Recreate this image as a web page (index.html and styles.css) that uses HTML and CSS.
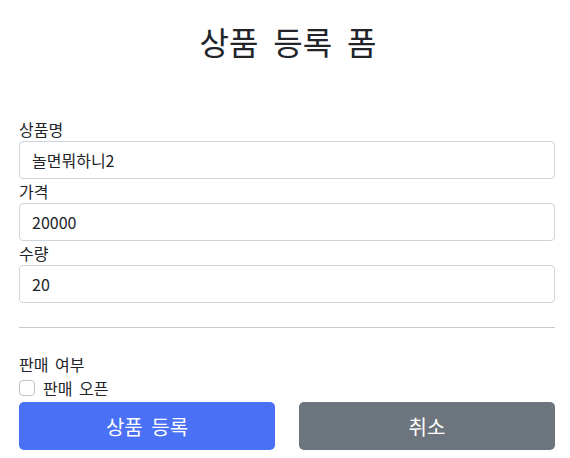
FILE: index.html
```html
<!DOCTYPE html>
<html lang="ko">
<head>
    <meta charset="UTF-8">
    <title>상품 등록 폼</title>
    <link rel="stylesheet" href="styles.css">
</head>
<body>
<div class="container">
    <div class="py-title">
        <h2>상품 등록 폼</h2>
    </div>

    <form class="item-form">
        <div>
            <label for="itemName">상품명</label>
            <input type="text" id="itemName" class="form-control" value="놀면뭐하니2">
        </div>
        <div>
            <label for="price">가격</label>
            <input type="text" id="price" class="form-control" value="20000">
        </div>
        <div>
            <label for="quantity">수량</label>
            <input type="text" id="quantity" class="form-control" value="20">
        </div>

        <hr class="my-4">

        <div>판매 여부</div>
        <div class="form-check">
            <input type="checkbox" id="open" class="check-input">
            <label for="open" class="check-label">판매 오픈</label>
        </div>

        <div class="row">
            <button class="btn btn-primary" type="submit">상품 등록</button>
            <button class="btn btn-secondary" type="button">취소</button>
        </div>
    </form>
</div>
</body>
</html>
```
FILE: styles.css
```css
body {
    margin: 0;
    font-family: "Noto Sans CJK KR", "Noto Sans", sans-serif;
    font-size: 16px;
    line-height: 24px;
    color: #212529;
    background: #fff;
    word-spacing: 2px;
}

.container {
    padding: 0 15px 0 19px;
}

.py-title {
    text-align: center;
    padding-top: 22px;
}

.py-title h2 {
    margin: 0;
    font-size: 32px;
    line-height: 38px;
    font-weight: 400;
    word-spacing: 6px;
    padding-left: 2px;
}

.item-form {
    margin-top: 57px;
}

label {
    display: block;
}

.form-control {
    display: block;
    width: 100%;
    height: 38px;
    box-sizing: border-box;
    margin: 0;
    padding: 6px 12px;
    border: 1px solid #ced4da;
    border-radius: 4px;
    font-family: inherit;
    font-size: 16px;
    color: #212529;
}

.my-4 {
    margin: 24px 0;
    border: 0;
    border-top: 1px solid #c8c9ca;
}

.form-check {
    display: flex;
    align-items: center;
    gap: 8px;
}

.check-input {
    appearance: none;
    width: 16px;
    height: 16px;
    margin: 0;
    border: 1px solid #bfc4c9;
    border-radius: 4px;
    background: #fff;
}

.row {
    display: grid;
    grid-template-columns: 1fr 1fr;
    gap: 24px;
    margin-top: 2px;
}

.btn {
    height: 48px;
    border: 0;
    border-radius: 5px;
    font-family: inherit;
    font-size: 20px;
    color: #fff;
    word-spacing: 3px;
}

.btn-primary {
    background-color: #4a70f5;
}

.btn-secondary {
    background-color: #6c757d;
}
```
